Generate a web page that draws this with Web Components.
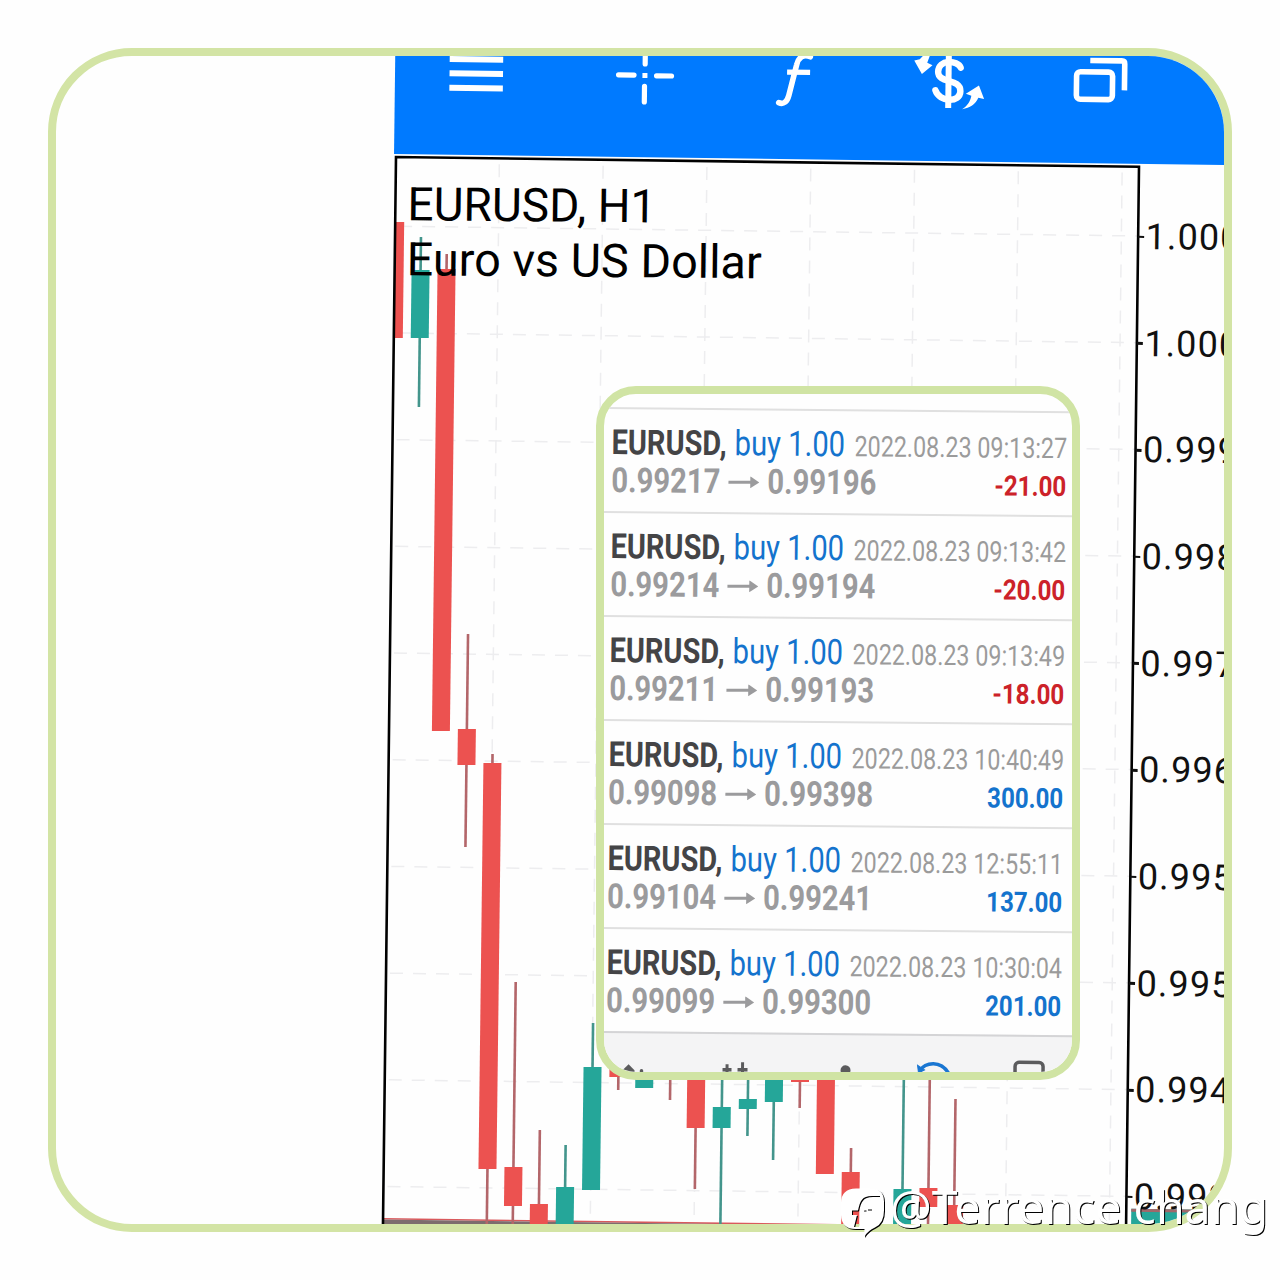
<!DOCTYPE html>
<html lang="en">
<head>
<meta charset="utf-8">
<title>EURUSD, H1</title>
<style>
  html, body { margin: 0; background: #fefefe; }
  body { width: 1280px; height: 1280px; overflow: hidden; font-family: Roboto, "Liberation Sans", sans-serif; }
</style>
</head>
<body>
<trade-poster></trade-poster>
<script>
const define = (name, html, setup) => {
  const tpl = document.createElement('template');
  tpl.innerHTML = html;
  customElements.define(name, class extends HTMLElement {
    connectedCallback() {
      if (this.shadowRoot) return;
      const root = this.attachShadow({ mode: 'open' });
      root.append(tpl.content.cloneNode(true));
      if (setup) setup(this, root);
    }
  });
};

/* Text set to an exact width; the bottom of the box is the baseline. */
define('fit-text', `<style>:host{display:block;flex:none}svg{display:block;overflow:visible}text{fill:currentColor}</style>
<svg><text x="0" lengthAdjust="spacingAndGlyphs"></text></svg>`, (el, root) => {
  const w = +el.getAttribute('w'), s = +el.getAttribute('size'), h = Math.round(s * .8);
  const svg = root.querySelector('svg'), t = root.querySelector('text');
  svg.setAttribute('width', w); svg.setAttribute('height', h);
  t.setAttribute('y', h); t.setAttribute('textLength', w);
  t.style.fontSize = s + 'px';
  t.style.fontWeight = el.getAttribute('weight') || 400;
  t.textContent = el.getAttribute('text');
});

define('tool-bar', `<style>
:host{display:flex;height:114px;background:#007aff;margin-left:-2px;padding-left:2px;box-sizing:border-box}
svg{display:block;flex:none;width:64px;height:114px;overflow:visible;fill:none;stroke:#fff;stroke-width:5.6}
.m{margin-left:47px}.c{margin-left:105px}.f{margin-left:85px}.d{margin-left:90px}.w{margin-left:89px}
</style>
<svg class="m" viewBox="444 41 64 114"><path d="M449.500 59.300h53.500M449.500 73.500h53.500M449.500 88h53.500" stroke-width="6"/></svg>
<svg class="c" viewBox="613 43.300 64 114"><path d="M618.500 75.200h15.500M656.500 75.700h15M645 50v14M644.600 86.500v15.500" stroke-linecap="round" stroke-width="5.200"/><path d="M642.400 75.600h5" stroke-width="5"/></svg>
<svg class="f" viewBox="762 45.200 64 114"><path d="M810 56.500c-7-3-12 1-13.500 8l-7.500 31c-1.500 6-5 9.500-10 7.300" stroke-linecap="round"/><path d="M787 72.200h23" stroke-width="5.200"/></svg>
<svg class="d" viewBox="916 47.300 64 114"><path d="M960.500 67.500c-3-7.500-22.500-8.500-22.500 4.500 0 12 22.500 6 22.500 19 0 12-21 11.500-25-.5" stroke-linecap="round" stroke-width="6.400"/><path d="M948.500 50v58" stroke-width="6"/><path d="M914 61l5.500-1.300 4.500-5h6l-3 8.300 5.300 2.500-10.500 8.800zM962.500 109c6-4 8-8 9-13.500l-5.500-2 13-8.500 5.300 13.500-5.800-1.200c-3 7-8 10-16 11.700z" fill="#fff" stroke="none"/></svg>
<svg class="w" viewBox="1069 49.300 64 114"><rect x="1076.500" y="72" width="36" height="27.500" rx="4"/><path d="M1090 60.600h31.500q3 0 3 3v26.500"/></svg>`);

define('candle-chart', `<style>
:host{display:block}svg{display:block;overflow:visible}</style><svg width="745" height="1080"></svg>`, (el, root) => {
  const step = 25.95, R = '#ec5250', G = '#25a699';
  /* slot, high, body top, body bottom, low, rising */
  const data = [
    [0,222,222,338,338,0],[1,237,270,338,407,1],[2,254,269,731,731,0],[3,634,729,765,847,0],
    [4,754,763,1169,1240,0],[5,982,1167,1206,1240,0],[6,1130,1204,1240,1240,0],[7,1145,1187,1240,1240,1],
    [8,1023,1067,1190,1190,1],[9,1040,1050,1077,1090,0],[10,1040,1050,1088,1088,1],[11,1040,1050,1070,1100,0],
    [12,1040,1050,1128,1189,0],[13,1040,1107,1128,1240,1],[14,1050,1099,1109,1136,1],[15,1040,1050,1102,1160,1],
    [16,1040,1050,1082,1108,0],[17,1040,1050,1174,1174,0],[18,1148,1172,1240,1240,0],
    [20,1040,1189,1240,1240,1],[21,1040,1188,1207,1240,0],[22,1099,1205,1240,1240,0]];
  let s = '<clipPath id="p"><rect x="0" y="0" width="743" height="1080"/></clipPath><g clip-path="url(#p)"><g stroke="#ededef" stroke-width="1.500" stroke-dasharray="13 10">';
  for (let i = 0; i < 10; i++) s += `<path d="M4 ${69.2 + 106.7 * i}H743"/>`;
  for (let i = 0; i < 7; i++) s += `<path d="M${103.4 + 103.8 * i} 6V1080"/>`;
  s += '</g><rect x="0" y="1061" width="743" height="1.600" fill="#d9595c"/><rect x="0" y="1062.500" width="743" height="5" fill="#7d6c6e"/>';
  for (const [k, hi, t, b, lo, up] of data) {
    const u = k * step, v = y => y - 157 - .0132 * u;
    s += `<path d="M${u} ${v(hi)}V${v(lo)}" stroke="${up ? '#43958c' : '#b3666a'}" stroke-width="2.600"/>` +
         `<rect x="${u - 9}" y="${v(t)}" width="18" height="${b - t}" fill="${up ? G : R}"/>`;
  }
  s += '</g><path d="M0 1080V0H743V1080" fill="none" stroke="#000" stroke-width="2.600"/>';
  root.querySelector('svg').innerHTML = s;
});

define('price-axis', `<style>
:host{display:block;padding-top:16.500px}
div{display:flex;align-items:center;height:106.700px;font-size:36px;letter-spacing:1.1px;color:#111;white-space:nowrap}
i{width:6px;height:2.600px;background:#111;margin-right:1.500px}
b{display:block;width:100px;height:30px;background:#25a699;border-top:3px solid #a0686a;margin:-41px 0 0 5px;position:relative;z-index:-1}
</style>`, (el, root) => {
  for (const p of el.getAttribute('prices').split(' ')) {
    const d = document.createElement('div');
    d.append(document.createElement('i'), p);
    root.append(d);
  }
  root.append(document.createElement('b'));
});

define('chart-screen', `<style>
:host{display:block;width:900px;transform-origin:0 117px;transform:matrix(1,.0132,-.0122,1,0,0)}
main{display:grid;grid-template-columns:743px 1fr;margin-top:3px}
candle-chart,header{grid-area:1/1}
header{display:grid;gap:17.500px;align-content:start;padding:26px 0 0 11.500px}
fit-text{transform:skewY(-.25deg);transform-origin:0 0}
price-axis{isolation:isolate}
</style>
<tool-bar></tool-bar>
<main><candle-chart></candle-chart>
<header><fit-text w="249" size="46.500" text="EURUSD, H1"></fit-text><fit-text w="355" size="46.500" text="Euro vs US Dollar"></fit-text></header>
<price-axis prices="1.000 1.000 0.999 0.998 0.997 0.996 0.995 0.995 0.994 0.993"></price-axis></main>`);

define('trade-row', `<style>
:host{display:grid;grid-template-rows:46px 38px;height:104px;box-sizing:border-box;border-top:2px solid #e0e0e0;padding:0 4px 0 7.500px}
div{display:flex;align-items:flex-end}
.a,.b{margin:-3px 0 1px}
.s{color:#444446}.k{color:#1473cd;margin-left:8px}.d{color:#9b9b9b;margin-left:9.500px}
.n{color:#9b9b9d}.p{margin-left:auto;margin-right:1px}
svg{display:block;flex:none;margin:0 8px 5px 8px}
</style><div class="a"></div><div class="b"></div>`, (el, root) => {
  const g = n => el.getAttribute(n), p = g('profit');
  root.querySelector('.a').innerHTML =
    `<fit-text class="s" w="115" size="34.500" weight="700" text="EURUSD,"></fit-text>` +
    `<fit-text class="k" w="110.500" size="35" text="buy 1.00"></fit-text>` +
    `<fit-text class="d" w="212.500" size="28.500" text="2022.08.23 ${g('time')}"></fit-text>`;
  root.querySelector('.b').innerHTML =
    `<fit-text class="n" w="109" size="34.500" weight="700" text="${g('from')}"></fit-text>` +
    `<svg width="31" height="12"><path d="M0 6h25" stroke="#9b9b9d" stroke-width="3"/><path d="M22 0l9 6-9 6z" fill="#9b9b9d"/></svg>` +
    `<fit-text class="n" w="109" size="34.500" weight="700" text="${g('to')}"></fit-text>` +
    `<fit-text class="p" style="color:${p[0] === '-' ? '#cc2229' : '#1473cd'}" w="${p[0] === '-' ? 72 : 76}" size="28" weight="700" text="${p}"></fit-text>`;
});

define('tab-strip', `<style>
:host{display:flex;height:70px;background:#f4f4f5;border-top:2px solid #d4d4d6;padding-left:11.500px;margin:0 -12px 0 -2px}
svg{display:block;flex:none;width:40px;height:48px;fill:none;stroke:#5b5b5d;stroke-width:3.500;overflow:visible;margin-left:2px}
.b{margin-left:65px}.c{margin-left:71.500px}.d{margin-left:46.500px}.e{margin-left:56px}
</style>
<svg viewBox="609 1033 40 48"><path d="M628 1064l6 6v8h-12v-8z" fill="#5b5b5d" stroke="none"/><circle cx="641" cy="1070.500" r="1.800" fill="#5b5b5d" stroke="none"/></svg>
<svg class="b" viewBox="714 1034 40 48"><path d="M722 1069.500h9M737 1069.500h10"/><path d="M726.500 1064v14M742 1062v16" stroke-width="3"/></svg>
<svg class="c" viewBox="825.500 1035 40 48"><circle cx="845.500" cy="1070" r="5" fill="#5b5b5d" stroke="none"/></svg>
<svg class="d" viewBox="912 1036 40 48" style="stroke:#1976d2"><path d="M919 1071c6-9 21-11 29 2"/><path d="M917 1065.500l1 7.500 6-3z" fill="#1976d2" stroke-width="1"/></svg>
<svg class="e" viewBox="1008 1037 40 48"><rect x="1014.500" y="1062.500" width="28" height="24" rx="4"/></svg>`);

define('history-card', `<style>
:host{display:block;box-sizing:border-box;width:484px;height:694px;border:8px solid #d0e4a4;border-radius:40px;background:#fefefe;overflow:hidden}
section{width:468px;padding-top:13px;transform-origin:0 13px;transform:matrix(1,.009,-.0098,1,0,0)}
trade-row{margin-right:-12px;padding-right:16px}
</style><section></section>`, (el, root) => {
  const rows = [['09:13:27','0.99217','0.99196','-21.00'],['09:13:42','0.99214','0.99194','-20.00'],
    ['09:13:49','0.99211','0.99193','-18.00'],['10:40:49','0.99098','0.99398','300.00'],
    ['12:55:11','0.99104','0.99241','137.00'],['10:30:04','0.99099','0.99300','201.00']];
  root.querySelector('section').innerHTML = rows.map(r =>
    `<trade-row time="${r[0]}" from="${r[1]}" to="${r[2]}" profit="${r[3]}"></trade-row>`).join('') + '<tab-strip></tab-strip>';
});

define('author-mark', `<style>
:host{display:flex;align-items:flex-end;color:#fff;font-family:"Noto Sans","Open Sans",sans-serif;filter:drop-shadow(1.500px 1.300px 0 #000)}
svg{display:block;overflow:visible;margin-bottom:-14px}
fit-text{margin-left:4px}
</style>
<svg width="45" height="50" viewBox="841 1188 45 50"><path d="M856 1188.500h14q14 0 14 13v9q0 13-9 17-7 3-11 9.500l.5-8h-9q-14 0-14.500-14v-12q0-14 15-14.500zM880 1196h-8c-10 0-12 5-14 14.500h-6v4.500h5l-3 12h5l3-12h4.500v-4.500h-3.500c2-9 5-10.500 17-11z" fill="#fff" fill-rule="evenodd"/><path d="M868 1210h4" stroke="#000" stroke-width="1"/></svg>
<fit-text w="378" size="45" text="@Terrence chang"></fit-text>`);

define('trade-poster', `<style>
:host{display:block;position:relative;width:1280px;height:1280px}
.frame{position:absolute;inset:48px;box-sizing:border-box;border:8px solid #d3e4a5;border-radius:84px;overflow:hidden;background:#fefefe}
chart-screen{margin:-16px 0 0 340px}
history-card{position:absolute;left:596px;top:386px}
author-mark{position:absolute;left:841px;top:1188px}
</style>
<div class="frame"><chart-screen></chart-screen></div>
<history-card></history-card>
<author-mark></author-mark>`);
</script>
</body>
</html>
